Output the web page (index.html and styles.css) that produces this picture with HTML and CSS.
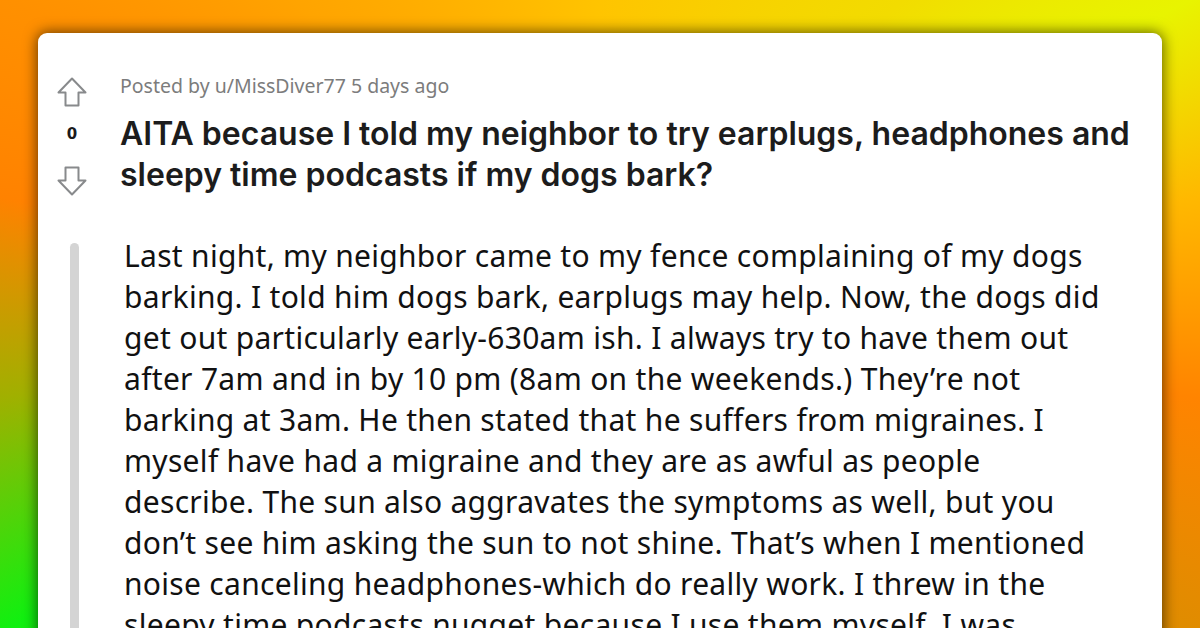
FILE: index.html
```html
<!DOCTYPE html>
<html lang="en">
<head>
<meta charset="utf-8">
<title>AITA post</title>
<link rel="stylesheet" href="styles.css">
</head>
<body>
<div class="stage">
  <article class="card">
    <div class="votes">
      <svg class="arrow" viewBox="0 0 30 30" width="30" height="30" aria-hidden="true">
        <path d="M15 1.5 L1.5 15.5 H8.5 V28.5 H21.5 V15.5 H28.5 Z" fill="none" stroke="#888a8c" stroke-width="2" stroke-linejoin="round"/>
      </svg>
      <div class="count">0</div>
      <svg class="arrow" viewBox="0 0 30 30" width="30" height="30" aria-hidden="true">
        <path d="M15 28.5 L1.5 14.5 H8.5 V1.5 H21.5 V14.5 H28.5 Z" fill="none" stroke="#888a8c" stroke-width="2" stroke-linejoin="round"/>
      </svg>
    </div>
    <div class="content">
      <div class="meta">Posted by u/MissDiver77 5 days ago</div>
      <h1 class="title">AITA because I told my neighbor to try earplugs, headphones and<br>sleepy time podcasts if my dogs bark?</h1>
      <div class="body">
        <div class="bar"></div>
        <p class="text">Last night, my neighbor came to my fence complaining of my dogs<br>barking. I told him dogs bark, earplugs may help. Now, the dogs did<br>get out particularly early-630am ish. I always try to have them out<br>after 7am and in by 10 pm (8am on the weekends.) They’re not<br>barking at 3am. He then stated that he suffers from migraines. I<br>myself have had a migraine and they are as awful as people<br>describe. The sun also aggravates the symptoms as well, but you<br>don’t see him asking the sun to not shine. That’s when I mentioned<br>noise canceling headphones-which do really work. I threw in the<br>sleepy time podcasts nugget because I use them myself. I was</p>
      </div>
    </div>
  </article>
</div>
</body>
</html>
```

FILE: styles.css
```css
html, body {
  margin: 0;
  padding: 0;
  width: 1200px;
  height: 628px;
  overflow: hidden;
}

.stage {
  width: 1200px;
  height: 628px;
  box-sizing: border-box;
  padding: 33px 38px 0 38px;
  overflow: hidden;
  background: conic-gradient(from 0deg at 50% 50%,
    #ffc400 0deg,
    #f2dc00 44deg,
    #e8f400 62deg,
    #ffb800 79deg,
    #ff8400 98deg,
    #e08c00 118deg,
    #a0a000 180deg,
    #10f010 242deg,
    #a0b000 262deg,
    #ff8200 281deg,
    #ff9000 298deg,
    #ffa400 316deg,
    #ffc400 360deg);
}

.card {
  display: flex;
  background: #ffffff;
  border-radius: 9px;
  height: 700px;
  box-shadow: 0 0 14px 1px rgba(0, 0, 0, 0.6);
}

.votes {
  width: 30px;
  margin-left: 19px;
  margin-right: 33px;
  padding-top: 44px;
  display: flex;
  flex-direction: column;
  align-items: center;
}

.arrow {
  display: block;
}

.count {
  font-family: "DejaVu Sans", sans-serif;
  font-weight: 700;
  font-size: 15px;
  color: #1a1a1b;
  line-height: 20px;
  margin: 17px 0 22px;
}

.content {
  flex: 1;
  padding-top: 41px;
}

.meta {
  font-family: "Noto Sans", sans-serif;
  font-size: 19.5px;
  line-height: 24px;
  color: #7c7c7c;
}

.title {
  margin: 15px 0 0;
  font-family: Inter, "Noto Sans", sans-serif;
  font-weight: 600;
  font-size: 32px;
  line-height: 41px;
  color: #1c1c1c;
  white-space: nowrap;
}

.body {
  display: flex;
  margin-left: -50px;
  margin-top: 40px;
}

.bar {
  width: 9px;
  margin-top: 8px;
  height: 500px;
  background: #d4d4d4;
  border-radius: 5px 5px 0 0;
  flex: none;
}

.text {
  margin: 0 0 0 45px;
  font-family: "Noto Sans", sans-serif;
  font-size: 30px;
  letter-spacing: 0.3px;
  line-height: 41px;
  color: #111111;
  white-space: nowrap;
}
```
